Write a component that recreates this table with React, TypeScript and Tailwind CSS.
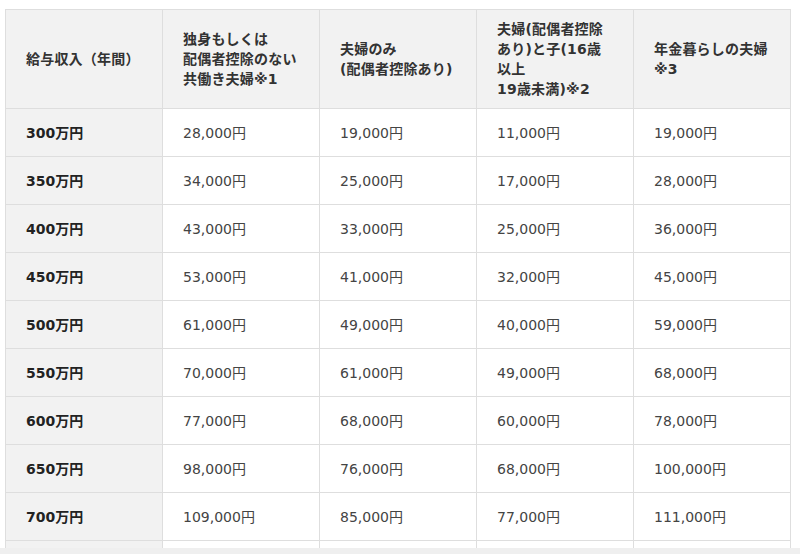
const headers = [
  ["給与収入（年間）"],
  ["独身もしくは", "配偶者控除のない", "共働き夫婦※1"],
  ["夫婦のみ", "(配偶者控除あり)"],
  ["夫婦(配偶者控除", "あり)と子(16歳", "以上", "19歳未満)※2"],
  ["年金暮らしの夫婦", "※3"],
];

const rows = [
  ["300万円", "28,000円", "19,000円", "11,000円", "19,000円"],
  ["350万円", "34,000円", "25,000円", "17,000円", "28,000円"],
  ["400万円", "43,000円", "33,000円", "25,000円", "36,000円"],
  ["450万円", "53,000円", "41,000円", "32,000円", "45,000円"],
  ["500万円", "61,000円", "49,000円", "40,000円", "59,000円"],
  ["550万円", "70,000円", "61,000円", "49,000円", "68,000円"],
  ["600万円", "77,000円", "68,000円", "60,000円", "78,000円"],
  ["650万円", "98,000円", "76,000円", "68,000円", "100,000円"],
  ["700万円", "109,000円", "85,000円", "77,000円", "111,000円"],
  // next row only peeks out under the bottom bar
  ["", "", "", "", ""],
];

export default function App() {
  return (
    <div
      className="h-[554px] w-[800px] flex flex-col bg-white text-[14px] text-[#333]"
      style={{ fontFamily: '"DejaVu Sans", "Noto Sans CJK JP", sans-serif' }}
    >
      {/* Table area, last row is cut off by the bottom bar */}
      <div className="flex-1 overflow-hidden pt-[9px] pl-[5px]">
        <table className="w-[786px] table-fixed border-collapse">
          <thead>
            <tr>
              {headers.map((lines, i) => (
                <th
                  key={i}
                  className="h-[99px] border border-[#dedede] bg-[#f2f2f2] px-[20px] py-0 text-left align-middle font-bold leading-[20px] tracking-[0.2px] text-[#333]"
                >
                  {lines.map((l, j) => (
                    <div key={j}>{l}</div>
                  ))}
                </th>
              ))}
            </tr>
          </thead>
          <tbody>
            {rows.map((row, r) => (
              <tr key={r}>
                {row.map((cell, c) => (
                  <td
                    key={c}
                    className={
                      c === 0
                        ? "h-[48px] border border-[#dedede] bg-[#f2f2f2] px-[20px] py-0 font-bold leading-[20px] text-[#222]"
                        : "h-[48px] border border-[#dedede] bg-white px-[20px] py-0 leading-[20px] text-[#444]"
                    }
                  >
                    {cell}
                  </td>
                ))}
              </tr>
            ))}
          </tbody>
        </table>
      </div>
      <div className="h-[6px] bg-[#efefef]" />
    </div>
  );
}
